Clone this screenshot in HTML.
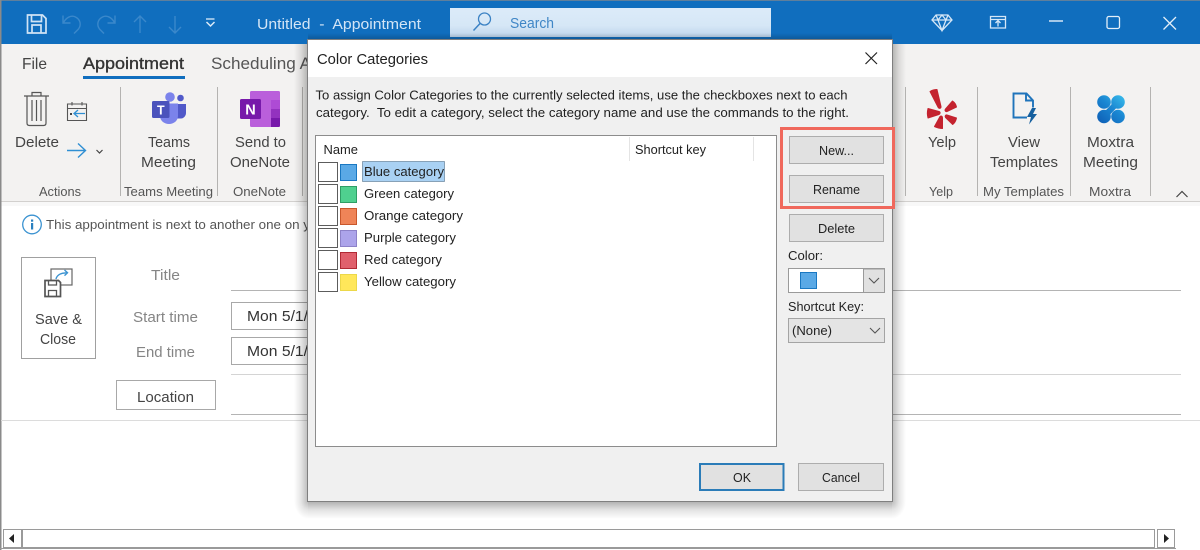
<!DOCTYPE html>
<html><head><meta charset="utf-8"><title>Untitled - Appointment</title>
<style>
html,body{margin:0;padding:0;background:#fff;width:1200px;height:550px;overflow:hidden}
svg{display:block;position:absolute;left:0;top:0}
text{font-family:"Liberation Sans",sans-serif;white-space:pre}
.r{font-size:15px;fill:#444}
.g{font-size:13px;fill:#555}
.d{font-size:12.5px;fill:#222}
.f{font-size:15px;fill:#858585}
</style></head><body>
<svg width="1200" height="550" viewBox="0 0 1200 550" xmlns="http://www.w3.org/2000/svg">
<defs>
<linearGradient id="sb" x1="0" y1="0" x2="0" y2="1"><stop offset="0" stop-color="#dcebf9"/><stop offset=".6" stop-color="#d6e7f6"/><stop offset="1" stop-color="#bdd5ec"/></linearGradient>
<linearGradient id="mx" gradientUnits="userSpaceOnUse" x1="1100" y1="122" x2="1122" y2="97"><stop offset="0" stop-color="#0f62b8"/><stop offset=".55" stop-color="#1a86d2"/><stop offset="1" stop-color="#35b5e8"/></linearGradient>
</defs>
<rect width="1200" height="550" fill="#fff"/>
<!-- title bar -->
<rect width="1200" height="44" fill="#106ebe"/>
<rect width="1200" height="1" fill="#5f7f9c"/>
<g fill="none" stroke="#cfe3f5" stroke-width="1.700">
<path d="M27.500 15h15l3.500 3.500V33H27.500z"/><path d="M31.500 15v6.500h10V15M32 33v-8h9v8"/>
</g>
<g fill="none" stroke="#3a88cb" stroke-width="1.400">
<path d="M63 15.500v7.500h7.500M63.500 22.500c3-5.500 8-7.500 12-5.500 5 2.500 6 8 3 12l-4.500 4.500"/>
<path d="M115 15.500v7.500h-7.500M114.500 22.500c-3-5.500-8-7.500-12-5.500-5 2.500-6 8-3 12l4.500 4.500"/>
<path d="M140 33V16M134 22l6-6 6 6"/><path d="M175 16v17M169 27l6 6 6-6"/>
</g>
<path d="M206 19h8.500" stroke="#dcebf8" stroke-width="1.300"/><path d="M206.500 22l4 4 4-4" fill="none" stroke="#dcebf8" stroke-width="1.500"/>
<text x="257" y="29" font-size="14.500" fill="#d3e5f6" textLength="164" lengthAdjust="spacingAndGlyphs">Untitled  -  Appointment</text>
<rect x="450" y="8" width="321" height="29" fill="url(#sb)"/>
<circle cx="484.500" cy="19" r="6" fill="none" stroke="#3b82c4" stroke-width="1.300"/><path d="M480 23.500l-6.500 7" stroke="#3b82c4" stroke-width="1.500"/>
<text x="510" y="28" font-size="14.500" fill="#3f86c6" textLength="44" lengthAdjust="spacingAndGlyphs">Search</text>
<g fill="none" stroke="#d5e7f7" stroke-width="1.300">
<path d="M936 15h12l4 5-10 10.500L932 20z"/><path d="M932 20h20M938 20l4 10.500 4-10.500M938 20l-2-5M946 20l2-5M938 20l4-5 4 5"/>
<path d="M990.500 16.500h15v11.500h-15zM990.500 19.500h15"/><path d="M998 26.500v-6M995.500 23l2.500-2.500 2.500 2.500"/>
</g>
<path d="M1049 21h14" stroke="#e3eff9" stroke-width="1.400"/>
<rect x="1107" y="16.500" width="12.500" height="12" rx="1.800" fill="none" stroke="#e3eff9" stroke-width="1.300"/>
<path d="M1163.500 17l12.500 12.500M1176 17l-12.500 12.500" stroke="#e3eff9" stroke-width="1.300"/>

<!-- ribbon -->
<rect y="44" width="1200" height="157" fill="#f3f2f1"/>
<rect y="201" width="1200" height="1" fill="#d2d0ce"/>
<rect y="202" width="1200" height="4" fill="#f8f8f8"/>
<rect x="0" y="0" width="1.500" height="550" fill="#8a8a8a"/>
<text x="22" y="69" font-size="16" fill="#444" textLength="25" lengthAdjust="spacingAndGlyphs">File</text>
<text x="83" y="69" font-size="16.500" fill="#333" stroke="#333" stroke-width=".35" textLength="101" lengthAdjust="spacingAndGlyphs">Appointment</text>
<rect x="83" y="76" width="102" height="3" fill="#106ebe"/>
<text x="211" y="69" font-size="16.500" fill="#555" textLength="100" lengthAdjust="spacingAndGlyphs">Scheduling A</text>
<g fill="#b4b3b1">
<rect x="120" y="87" width="1" height="109"/><rect x="217" y="87" width="1" height="109"/><rect x="302" y="87" width="1" height="109"/>
<rect x="905" y="87" width="1" height="109"/><rect x="977" y="87" width="1" height="109"/><rect x="1070" y="87" width="1" height="109"/><rect x="1150" y="87" width="1" height="109"/>
</g>
<!-- trash -->
<g fill="none" stroke="#555" stroke-width="1.200">
<path d="M24 96h25M32 96v-3.500h9V96M27 96v27c0 1.500 1 2.500 2.500 2.500h14c1.500 0 2.500-1 2.500-2.500V96"/>
<path d="M32 100v21M36.500 100v21M41 100v21"/>
</g>
<!-- calendar -->
<g fill="none" stroke="#555" stroke-width="1.100"><path d="M67.500 104h19v16.500h-19zM67.500 108.500h19M72 102v3.500M82 102v3.500"/></g>
<path d="M85 113.500h-11M78 110l-4 3.500 4 3.500" fill="none" stroke="#2f8fd3" stroke-width="1.300"/>
<rect x="70" y="113" width="2" height="2" fill="#444"/>
<path d="M67 150.500h18.500M78 143.500l7.500 7-7.500 7" fill="none" stroke="#2f8fd3" stroke-width="1.400"/>
<path d="M96.500 150l3 3 3-3" fill="none" stroke="#444" stroke-width="1.200"/>
<text x="15" y="147" class="r" textLength="44" lengthAdjust="spacingAndGlyphs">Delete</text>
<text x="39" y="196" class="g" textLength="42" lengthAdjust="spacingAndGlyphs">Actions</text>
<!-- teams -->
<circle cx="170" cy="97" r="4.800" fill="#7b83eb"/><circle cx="180.500" cy="98" r="3.300" fill="#5059c9"/>
<path d="M176 104h10v9c0 3-2.500 5.500-5 5.500h-5z" fill="#5059c9"/>
<path d="M160 103.500h18v12.500c0 4.500-4 8-9 8s-9-3.500-9-8z" fill="#7b83eb"/>
<rect x="152" y="101" width="17.500" height="17" rx="1.500" fill="#4b53bc"/>
<text x="160.800" y="114.500" font-size="12.500" font-weight="bold" fill="#fff" text-anchor="middle">T</text>
<text x="148" y="147" class="r" textLength="42" lengthAdjust="spacingAndGlyphs">Teams</text>
<text x="141" y="167" class="r" textLength="55" lengthAdjust="spacingAndGlyphs">Meeting</text>
<text x="124" y="196" class="g" textLength="89" lengthAdjust="spacingAndGlyphs">Teams Meeting</text>
<!-- onenote -->
<rect x="250" y="91" width="30" height="36" rx="1.500" fill="#ba5fdb"/>
<rect x="271" y="100" width="9" height="9" fill="#ae4bd5"/><rect x="271" y="109" width="9" height="9" fill="#9332bf"/><path d="M271 118h9v7.500c0 1-.5 1.500-1.500 1.500H271z" fill="#7719aa"/>
<rect x="240" y="99" width="21" height="20" rx="1.500" fill="#7719aa"/>
<text x="250.500" y="114.500" font-size="14.500" font-weight="bold" fill="#fff" text-anchor="middle">N</text>
<text x="235" y="147" class="r" textLength="51" lengthAdjust="spacingAndGlyphs">Send to</text>
<text x="230" y="167" class="r" textLength="60" lengthAdjust="spacingAndGlyphs">OneNote</text>
<text x="233" y="196" class="g" textLength="53" lengthAdjust="spacingAndGlyphs">OneNote</text>
<!-- yelp -->
<g fill="#c4232f" stroke="#c4232f" stroke-width="1" stroke-linejoin="round">
<path d="M930 91.500c2-1.300 5-2 7-2l4 17c.2 2-1.800 2.500-2.800 1z"/>
<path d="M928 108.500l11 3c1.500.5 1.500 2.300 0 3l-11 3.500c-.8-3-.8-6.500 0-9.500z"/>
<path d="M945.500 109l7-8c2 1.300 3.500 3.500 4 6L947 111.500c-1.700.5-2.600-1.200-1.500-2.500z"/>
<path d="M947 115l9.500 3c-.5 2.500-1.800 5-3.800 6.500L945.500 117.500c-.9-1.400.1-3 1.500-2.500z"/>
<path d="M940 116.500c1.300-1 2.500-.3 2.500 1.300v10.700c-2.800 0-5.700-.8-8-2z"/>
</g>
<text x="928" y="147" class="r" textLength="28" lengthAdjust="spacingAndGlyphs">Yelp</text>
<text x="929" y="196" class="g" textLength="24" lengthAdjust="spacingAndGlyphs">Yelp</text>
<!-- templates -->
<path d="M1027 117.500h-13.500V93.500h13l6.500 7v7M1026 93.500v7h7" fill="none" stroke="#1f74bb" stroke-width="1.900"/>
<path d="M1032 108l-5 9h4l-2 7.500 8-10.500h-4l3-6z" fill="#16609f"/>
<text x="1008" y="147" class="r" textLength="32" lengthAdjust="spacingAndGlyphs">View</text>
<text x="990" y="167" class="r" textLength="68" lengthAdjust="spacingAndGlyphs">Templates</text>
<text x="983" y="196" class="g" textLength="81" lengthAdjust="spacingAndGlyphs">My Templates</text>
<!-- moxtra -->
<g fill="url(#mx)">
<circle cx="1104" cy="102" r="6.800"/><circle cx="1118" cy="102" r="6.800"/><circle cx="1104" cy="116.500" r="6.800"/><circle cx="1118" cy="116.500" r="6.800"/>
</g>
<path d="M1105 115.500l12-12.500" stroke="url(#mx)" stroke-width="6" fill="none"/>
<text x="1087" y="147" class="r" textLength="47" lengthAdjust="spacingAndGlyphs">Moxtra</text>
<text x="1083" y="167" class="r" textLength="55" lengthAdjust="spacingAndGlyphs">Meeting</text>
<text x="1089" y="196" class="g" textLength="42" lengthAdjust="spacingAndGlyphs">Moxtra</text>
<path d="M1176.500 197l5.500-5.500 5.500 5.500" fill="none" stroke="#444" stroke-width="1.200"/>

<!-- info -->
<circle cx="32" cy="224.500" r="9.300" fill="none" stroke="#3b93d1" stroke-width="1.300"/>
<rect x="31" y="223" width="2.200" height="6.500" fill="#2a80bf"/><rect x="31" y="219.500" width="2.200" height="2.200" fill="#2a80bf"/>
<text x="46" y="229" font-size="12.800" fill="#555" textLength="264" lengthAdjust="spacingAndGlyphs">This appointment is next to another one on y</text>
<!-- save & close -->
<rect x="21.500" y="257.500" width="74" height="101" fill="#fff" stroke="#a0a0a0"/>
<rect x="51" y="269" width="21" height="16" fill="#fff" stroke="#666" stroke-width="1.200"/>
<path d="M56 279c1-4 5-6.500 11-6M64.500 270l3 2.800-3 2.800" fill="none" stroke="#3b93d1" stroke-width="1.400"/>
<path d="M45 280.500h13.500l2 2V296.500H45z" fill="#fff" stroke="#555" stroke-width="1.700"/>
<path d="M48.500 280.500v4.500h8v-4.500M48.500 296.500v-6h8v6" fill="none" stroke="#555" stroke-width="1.300"/>
<text x="35" y="324" class="r" textLength="47" lengthAdjust="spacingAndGlyphs">Save &amp;</text>
<text x="40" y="344" class="r" textLength="36" lengthAdjust="spacingAndGlyphs">Close</text>
<text x="151" y="280" class="f" textLength="29" lengthAdjust="spacingAndGlyphs">Title</text>
<text x="133" y="322" class="f" textLength="65" lengthAdjust="spacingAndGlyphs">Start time</text>
<text x="136" y="357" class="f" textLength="59" lengthAdjust="spacingAndGlyphs">End time</text>
<rect x="231" y="290" width="950" height="1" fill="#b4b4b4"/>
<rect x="231" y="374" width="950" height="1" fill="#d4d4d4"/>
<rect x="231" y="414" width="950" height="1" fill="#b4b4b4"/>
<rect x="1" y="420" width="1199" height="1" fill="#dcdcdc"/>
<rect x="231.500" y="302.500" width="200" height="27" fill="#fff" stroke="#a8a8a8"/>
<rect x="231.500" y="337.500" width="200" height="27" fill="#fff" stroke="#a8a8a8"/>
<text x="247" y="321" font-size="15" fill="#333" textLength="61" lengthAdjust="spacingAndGlyphs">Mon 5/1/</text>
<text x="247" y="356" font-size="15" fill="#333" textLength="61" lengthAdjust="spacingAndGlyphs">Mon 5/1/</text>
<rect x="116.500" y="380.500" width="99" height="29" fill="#fff" stroke="#a8a8a8"/>
<text x="137" y="402" class="r" textLength="57" lengthAdjust="spacingAndGlyphs">Location</text>
<!-- scrollbar -->
<rect x="3.500" y="529.500" width="1171" height="18" fill="#fff" stroke="#9a9a9a"/>
<rect x="21" y="529" width="2" height="19" fill="#9a9a9a"/>
<rect x="1154" y="529" width="3" height="19" fill="#fff"/><path d="M1154.500 529v19M1157.500 529v19" stroke="#9a9a9a"/>
<path d="M9 538.500l5-4.500v9z" fill="#222"/>
<path d="M1169 538.500l-5-4.500v9z" fill="#222"/>
<rect x="0" y="548" width="1176" height="1" fill="#9a9a9a"/>
</svg>
<svg width="1200" height="550" viewBox="0 0 1200 550" xmlns="http://www.w3.org/2000/svg">
<defs>
<linearGradient id="sl" x1="1" y1="0" x2="0" y2="0"><stop offset="0" stop-color="#000" stop-opacity=".27"/><stop offset=".5" stop-color="#000" stop-opacity=".1"/><stop offset="1" stop-color="#000" stop-opacity="0"/></linearGradient>
<linearGradient id="sr" x1="0" y1="0" x2="1" y2="0"><stop offset="0" stop-color="#000" stop-opacity=".27"/><stop offset=".5" stop-color="#000" stop-opacity=".1"/><stop offset="1" stop-color="#000" stop-opacity="0"/></linearGradient>
<linearGradient id="sd" x1="0" y1="0" x2="0" y2="1"><stop offset="0" stop-color="#000" stop-opacity=".32"/><stop offset=".5" stop-color="#000" stop-opacity=".11"/><stop offset="1" stop-color="#000" stop-opacity="0"/></linearGradient>
<linearGradient id="su" x1="0" y1="1" x2="0" y2="0"><stop offset="0" stop-color="#000" stop-opacity=".22"/><stop offset="1" stop-color="#000" stop-opacity="0"/></linearGradient>
<radialGradient id="c1" cx="1" cy="0" r="1"><stop offset="0" stop-color="#000" stop-opacity=".27"/><stop offset=".5" stop-color="#000" stop-opacity=".1"/><stop offset="1" stop-color="#000" stop-opacity="0"/></radialGradient>
<radialGradient id="c2" cx="0" cy="0" r="1"><stop offset="0" stop-color="#000" stop-opacity=".27"/><stop offset=".5" stop-color="#000" stop-opacity=".1"/><stop offset="1" stop-color="#000" stop-opacity="0"/></radialGradient>
</defs>
<!-- dialog shadow -->
<rect x="294" y="44" width="14" height="457" fill="url(#sl)"/>
<rect x="892" y="44" width="14" height="457" fill="url(#sr)"/>
<rect x="308" y="501" width="584" height="18" fill="url(#sd)"/>
<rect x="308" y="33" width="584" height="7" fill="url(#su)"/>
<rect x="294" y="501" width="14" height="18" fill="url(#c1)"/>
<rect x="892" y="501" width="14" height="18" fill="url(#c2)"/>
<!-- dialog -->
<rect x="308" y="40" width="584" height="461" fill="#f0f0f0"/>
<rect x="308" y="40" width="584" height="37" fill="#fff"/>
<rect x="307.500" y="39.500" width="585" height="462" fill="none" stroke="#7f7f7f"/>
<text x="317" y="64" font-size="14.500" fill="#222" textLength="111" lengthAdjust="spacingAndGlyphs">Color Categories</text>
<path d="M865.500 52.500l11.500 11.500M877 52.500l-11.500 11.500" stroke="#222" stroke-width="1.200"/>
<text x="315.500" y="99.500" class="d" textLength="532" lengthAdjust="spacingAndGlyphs">To assign Color Categories to the currently selected items, use the checkboxes next to each</text>
<text x="316" y="117" class="d" textLength="533" lengthAdjust="spacingAndGlyphs">category.  To edit a category, select the category name and use the commands to the right.</text>
<rect x="315.500" y="135.500" width="461" height="311" fill="#fff" stroke="#8c8c8c"/>
<text x="323.500" y="154" class="d" textLength="34.500" lengthAdjust="spacingAndGlyphs">Name</text>
<text x="635" y="154" class="d" textLength="71" lengthAdjust="spacingAndGlyphs">Shortcut key</text>
<rect x="629" y="137" width="1" height="24" fill="#e4e4e4"/><rect x="753" y="137" width="1" height="24" fill="#e4e4e4"/>
<rect x="362.500" y="161.500" width="82" height="20" fill="#a9d1f3" stroke="#3a5a75" stroke-dasharray="1 1"/>
<g fill="#fff" stroke="#5c5c5c">
<rect x="318.500" y="162.500" width="19" height="19"/><rect x="318.500" y="184.500" width="19" height="19"/><rect x="318.500" y="206.500" width="19" height="19"/><rect x="318.500" y="228.500" width="19" height="19"/><rect x="318.500" y="250.500" width="19" height="19"/><rect x="318.500" y="272.500" width="19" height="19"/>
</g>
<rect x="340.500" y="164.500" width="16" height="16" fill="#5aa9e6" stroke="#1a78c2"/>
<rect x="340.500" y="186.500" width="16" height="16" fill="#4fd08f" stroke="#2f9e66"/>
<rect x="340.500" y="208.500" width="16" height="16" fill="#ef8458" stroke="#c9582c"/>
<rect x="340.500" y="230.500" width="16" height="16" fill="#aca4ea" stroke="#8d82c8"/>
<rect x="340.500" y="252.500" width="16" height="16" fill="#e0606c" stroke="#b12a35"/>
<rect x="340.500" y="274.500" width="16" height="16" fill="#ffe75a" stroke="#ecd84a"/>
<text x="364" y="176" class="d" textLength="80" lengthAdjust="spacingAndGlyphs">Blue category</text>
<text x="364" y="198" class="d" textLength="90" lengthAdjust="spacingAndGlyphs">Green category</text>
<text x="364" y="220" class="d" textLength="99" lengthAdjust="spacingAndGlyphs">Orange category</text>
<text x="364" y="242" class="d" textLength="92" lengthAdjust="spacingAndGlyphs">Purple category</text>
<text x="364" y="264" class="d" textLength="78" lengthAdjust="spacingAndGlyphs">Red category</text>
<text x="364" y="286" class="d" textLength="92" lengthAdjust="spacingAndGlyphs">Yellow category</text>
<!-- right buttons -->
<g fill="#e1e1e1" stroke="#adadad">
<rect x="789.500" y="136.500" width="94" height="27"/><rect x="789.500" y="175.500" width="94" height="27"/><rect x="789.500" y="214.500" width="94" height="27"/><rect x="798.500" y="463.500" width="85" height="27"/>
</g>
<text x="819" y="155" class="d" textLength="35" lengthAdjust="spacingAndGlyphs">New...</text>
<text x="813" y="194" class="d" textLength="47" lengthAdjust="spacingAndGlyphs">Rename</text>
<text x="818" y="233" class="d" textLength="37" lengthAdjust="spacingAndGlyphs">Delete</text>
<text x="788" y="260" class="d" textLength="35" lengthAdjust="spacingAndGlyphs">Color:</text>
<rect x="788.500" y="268.500" width="96" height="24" fill="#fff" stroke="#9a9a9a"/>
<rect x="863.500" y="269" width="21" height="23.500" fill="#e1e1e1" stroke="#9a9a9a"/>
<path d="M869 278l5 5 5-5" fill="none" stroke="#555" stroke-width="1.100"/>
<rect x="800.500" y="272.500" width="16" height="16" fill="#5aa9e6" stroke="#1a78c2"/>
<text x="788" y="311" class="d" textLength="76" lengthAdjust="spacingAndGlyphs">Shortcut Key:</text>
<rect x="788.500" y="318.500" width="96" height="24" fill="#e4e4e4" stroke="#a4a4a4"/>
<text x="792" y="335" class="d" textLength="40" lengthAdjust="spacingAndGlyphs">(None)</text>
<path d="M870 328l5 5 5-5" fill="none" stroke="#555" stroke-width="1.100"/>
<rect x="700" y="464" width="83.500" height="26" fill="#e1e1e1" stroke="#2b7cb8" stroke-width="2"/>
<text x="733" y="482" class="d" textLength="18" lengthAdjust="spacingAndGlyphs">OK</text>
<text x="822" y="482" class="d" textLength="38" lengthAdjust="spacingAndGlyphs">Cancel</text>
<!-- highlight -->
<rect x="781.500" y="128.500" width="112" height="79" fill="none" stroke="#f0685c" stroke-width="3"/>
</svg>
</body></html>
